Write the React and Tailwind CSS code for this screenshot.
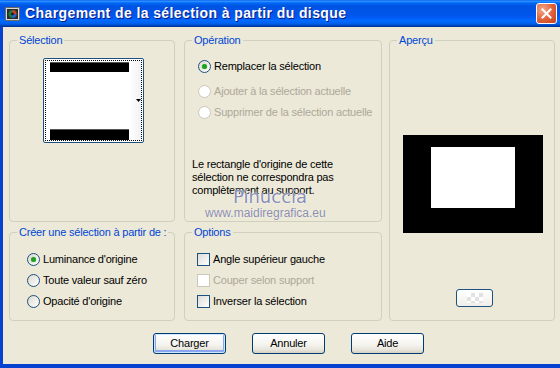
import React from 'react'

function Radio({ checked = false, disabled = false }) {
  return (
    <span
      className={`flex h-[13px] w-[13px] shrink-0 items-center justify-center rounded-full border ${
        disabled
          ? 'border-[#cac8bb] bg-white'
          : 'border-[#1c5180] bg-[linear-gradient(135deg,#dcd9cd,#ffffff)]'
      }`}
    >
      {checked && <span className="h-[5px] w-[5px] rounded-full bg-[#21a121] shadow-[0_0_1px_#5fd35f]" />}
    </span>
  )
}

function Check({ disabled = false }) {
  return (
    <span
      className={`block h-[13px] w-[13px] shrink-0 border ${
        disabled
          ? 'border-[#cac8bb] bg-white'
          : 'border-[#1c5180] bg-[linear-gradient(135deg,#dcdcd7,#ffffff)]'
      }`}
    />
  )
}

function Group({ label, className = '', children }) {
  return (
    <fieldset className={`shrink-0 rounded-[4px] border border-[#d0d0bf] ${className}`}>
      <legend className="ml-[7px] whitespace-nowrap px-[2px] text-[#0046d5]">{label}</legend>
      {children}
    </fieldset>
  )
}

function Button({ children, isDefault = false, className = '' }) {
  return (
    <button
      className={`flex h-[21px] w-[73px] items-center justify-center rounded-[3px] border border-[#003c74] bg-[linear-gradient(180deg,#ffffff_0%,#f5f4ef_55%,#e6e3d9_85%,#d6d0c5_100%)] text-black ${
        isDefault ? 'shadow-[inset_0_0_0_1px_#cee7ff,inset_0_-1px_0_2px_#8aa6ee]' : ''
      } ${className}`}
    >
      {children}
    </button>
  )
}

function AppIcon() {
  return (
    <svg width="16" height="16" viewBox="0 0 16 16">
      <rect x="0.5" y="1.5" width="14" height="13" fill="#d8d8d8" stroke="#6a6a6a" />
      <rect x="2" y="3" width="11" height="10" fill="#2b2b2b" />
      <circle cx="7.5" cy="8" r="4" fill="#1c7a3a" />
      <path d="M7.5 8 L7.5 4 A4 4 0 0 1 11.5 8 Z" fill="#d23a2a" />
      <path d="M7.5 8 L11.5 8 A4 4 0 0 1 7.5 12 Z" fill="#2d5fd0" />
      <circle cx="7.5" cy="8" r="1.3" fill="#111" />
    </svg>
  )
}

export default function App() {
  return (
    <div className="relative flex h-[368px] w-[560px] flex-col overflow-hidden font-['Liberation_Sans',Arial,sans-serif] text-[11px] leading-[13px] tracking-[-0.2px] text-black">
      {/* Title bar */}
      <div className="flex h-[27px] shrink-0 items-center bg-[linear-gradient(180deg,#0058ee_0%,#3593ff_4%,#288eff_6%,#127dff_8%,#036ffc_10%,#0262ee_14%,#0057e5_20%,#0054e3_24%,#0055eb_56%,#005bf5_66%,#026afe_76%,#0062ef_86%,#0052d6_92%,#0040ab_96%,#003092_100%)] pl-[5px] pr-[3px]">
        <AppIcon />
        <span className="ml-[4px] text-[14px] font-bold tracking-[0.4px] text-white [text-shadow:1px_1px_0_#0a1883]">
          Chargement de la sélection à partir du disque
        </span>
        <div className="ml-auto flex h-[21px] w-[21px] items-center justify-center rounded-[3px] border border-white bg-[radial-gradient(circle_at_30%_30%,#f1a98c,#e0603a_55%,#c4401a)]">
          <svg width="11" height="11" viewBox="0 0 11 11">
            <path d="M1.5 1.5 L9.5 9.5 M9.5 1.5 L1.5 9.5" stroke="#fff" strokeWidth="2" strokeLinecap="square" />
          </svg>
        </div>
      </div>

      {/* Body */}
      <div className="flex flex-1 flex-col border-b-[4px] border-l-[3px] border-[#0842d0] bg-[#ece9d8] pl-[6px] pt-[7px]">
        <div className="flex">
          <div className="flex flex-col">
            <div className="flex">
              <Group label="Sélection" className="h-[188px] w-[166px]">
                <div className="ml-[33px] mt-[11px] h-[85px] w-[101px] rounded-[2px] border border-[#1c5180] bg-white p-[1px]">
                  <div className="flex h-full border border-dotted border-black">
                    <div className="flex w-[83px] flex-col justify-between pl-[4px] pt-[1px]">
                      <div className="h-[10px] border-t border-[#555] bg-black" />
                      <div className="h-[11px] border-t border-[#555] bg-black" />
                    </div>
                    <div className="flex flex-1 items-center justify-end bg-[linear-gradient(90deg,#ffffff,#f2f2f2)]">
                      <svg width="5" height="3" viewBox="0 0 5 3">
                        <path d="M0 0 H5 L2.5 3 Z" fill="#000" />
                      </svg>
                    </div>
                  </div>
                </div>
              </Group>

              <Group label="Opération" className="ml-[9px] h-[188px] w-[198px]">
                <div className="ml-[13px] mt-[13px] flex items-center gap-[3px]">
                  <Radio checked />
                  <span>Remplacer la sélection</span>
                </div>
                <div className="ml-[13px] mt-[12px] flex items-center gap-[3px] text-[#aca899]">
                  <Radio disabled />
                  <span>Ajouter à la sélection actuelle</span>
                </div>
                <div className="ml-[13px] mt-[8px] flex items-center gap-[3px] text-[#aca899]">
                  <Radio disabled />
                  <span>Supprimer de la sélection actuelle</span>
                </div>
                <p className="ml-[7px] mt-[39px]">
                  Le rectangle d'origine de cette
                  <br />
                  sélection ne correspondra pas
                  <br />
                  complètement au support.
                </p>
              </Group>
            </div>

            <div className="mt-[4px] flex">
              <Group label="Créer une sélection à partir de :" className="h-[95px] w-[166px]">
                <div className="ml-[17px] mt-[14px] flex flex-col gap-[8px]">
                  <div className="flex items-center gap-[3px]">
                    <Radio checked />
                    <span>Luminance d'origine</span>
                  </div>
                  <div className="flex items-center gap-[3px]">
                    <Radio />
                    <span>Toute valeur sauf zéro</span>
                  </div>
                  <div className="flex items-center gap-[3px]">
                    <Radio />
                    <span>Opacité d'origine</span>
                  </div>
                </div>
              </Group>

              <Group label="Options" className="ml-[9px] h-[95px] w-[198px]">
                <div className="ml-[12px] mt-[14px] flex flex-col gap-[8px]">
                  <div className="flex items-center gap-[3px]">
                    <Check />
                    <span>Angle supérieur gauche</span>
                  </div>
                  <div className="flex items-center gap-[3px] text-[#aca899]">
                    <Check disabled />
                    <span>Couper selon support</span>
                  </div>
                  <div className="flex items-center gap-[3px]">
                    <Check />
                    <span>Inverser la sélection</span>
                  </div>
                </div>
              </Group>
            </div>
          </div>

          <Group label="Aperçu" className="ml-[7px] h-[287px] w-[166px]">
            <div className="ml-[13px] mt-[88px] h-[98px] w-[140px] bg-black pl-[28px] pt-[12px]">
              <div className="h-[61px] w-[84px] bg-white" />
            </div>
            <div className="ml-[66px] mt-[56px] flex h-[18px] w-[37px] items-center justify-center rounded-[3px] border border-[#1c5180] bg-[linear-gradient(180deg,#ffffff,#f0efe9)]">
              <div className="h-[10px] w-[16px] bg-[conic-gradient(#e2e2e2_25%,#ffffff_0_50%,#e2e2e2_0_75%,#ffffff_0)] bg-[length:8px_8px]" />
            </div>
          </Group>
        </div>

        <div className="mt-[12px] flex pl-[144px]">
          <Button isDefault>Charger</Button>
          <Button className="ml-[26px]">Annuler</Button>
          <Button className="ml-[26px]">Aide</Button>
        </div>
      </div>

      {/* Watermark overlay */}
      <div className="pointer-events-none absolute left-[233px] top-[187px] font-['DejaVu_Sans',sans-serif] text-[18px] leading-[20px] tracking-normal text-[#8a8fb3] [text-shadow:0_0_1px_#fff,0_0_2px_#fff]">
        Pinuccia
      </div>
      <div className="pointer-events-none absolute left-[205px] top-[207px] text-[12px] leading-[13px] tracking-normal text-[#8a8dab] [text-shadow:0_0_1px_#fff]">
        www.maidiregrafica.eu
      </div>
    </div>
  )
}
